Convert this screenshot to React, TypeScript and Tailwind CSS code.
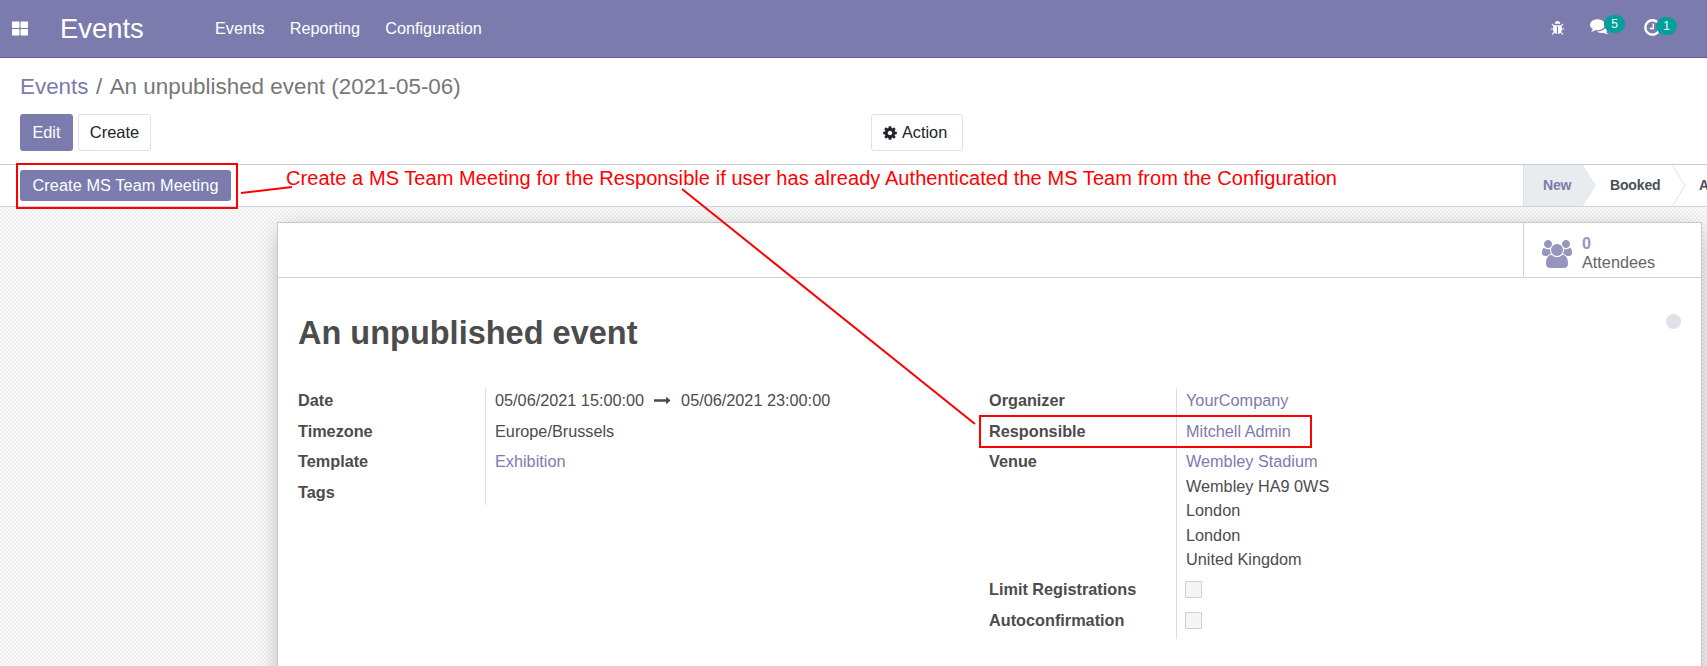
import type { ReactNode } from 'react';
import { FaThLarge } from 'react-icons/fa';

const COG =
  'M1024 896q0-106-75-181t-181-75-181 75-75 181 75 181 181 75 181-75 75-181zM1536 787v222q0 12-8 23t-20 13l-185 28q-19 54-39 91 35 50 107 138 10 12 10 25t-9 23q-27 37-99 108t-94 71q-12 0-26-9l-138-108q-44 23-91 38-16 136-29 186-7 28-36 28h-222q-14 0-24.5-8.5t-11.5-21.5l-28-184q-49-16-90-37l-141 107q-10 9-25 9-14 0-25-11-126-114-165-168-7-10-7-23 0-12 8-23 15-21 51-66.5t54-70.5q-27-50-41-99l-183-27q-13-2-21-12.5t-8-23.5v-222q0-12 8-23t19-13l186-28q14-46 39-92-40-57-107-138-10-12-10-24 0-10 9-23 26-36 98.5-107.5t94.5-71.5q13 0 26 10l138 107q44-23 91-38 16-136 29-186 7-28 36-28h222q14 0 24.5 8.5t11.5 21.5l28 184q49 16 90 37l142-107q9-9 24-9 13 0 25 10 129 119 165 170 7 8 7 22 0 12-8 23-15 21-51 66.5t-54 70.5q26 50 41 98l183 28q13 2 21 12.5t8 23.5z';
const BUG =
  'M1632 960q0 26-19 45t-45 19h-224q0 171-67 290l208 209q19 19 19 45t-19 45q-18 19-45 19t-45-19l-198-197q-5 5-15 13t-42 28.5-65 36.5-82 29-97 13v-896h-128v896q-51 0-101.5-13.5t-87-33-66-39-43.5-32.5l-15-14-183 207q-20 21-48 21-24 0-43-16-19-18-20.5-44.5t15.5-46.5l202-227q-58-114-58-274h-224q-26 0-45-19t-19-45 19-45 45-19h224v-294l-173-173q-19-19-19-45t19-45 45-19 45 19l173 173h844l173-173q19-19 45-19t45 19 19 45-19 45l-173 173v294h224q26 0 45 19t19 45zM1152 320h-640q0-133 93.5-226.5t226.5-93.5 226.5 93.5 93.5 226.5z';
const COMMENTS =
  'M1408 640q0 139-94 257t-256.5 186.5-353.5 68.5q-86 0-176-16-124 88-278 128-36 9-86 16h-3q-11 0-20.5-8t-11.5-21q-1-3-1-6.5t.5-6.5 2-6l2.5-5 3.5-5.5 4-5 4.5-5 4-4.5q5-6 23-25t26-29.5 22.5-29 25-38.5 20.5-44q-124-72-195-177t-71-224q0-139 94-257t256.5-186.5 353.5-68.5 353.5 68.5 256.5 186.5 94 257zM1792 896q0 120-71 224.5t-195 176.5q10 24 20.5 44t25 38.5 22.5 29 26 29.5 23 25q1 1 4 4.5t4.5 5 4 5 3.5 5.5l2.5 5 2 6 .5 6.5-1 6.5q-3 14-13 22t-22 7q-50-7-86-16-154-40-278-128-90 16-176 16-271 0-472-132 58 4 88 4 161 0 309-45t264-129q125-92 192-212t67-254q0-77-23-152 129 71 204 178t75 230z';
const ARROW =
  'M1728 893q0 14-10 24l-384 354q-16 14-35 6-19-9-19-29v-224h-1248q-14 0-23-9t-9-23v-192q0-14 9-23t23-9h1248v-224q0-21 19-29t35 5l384 350q10 10 10 23z';
const USERS =
  'M593 896q-162 5-265 128h-134q-82 0-138-40.5t-56-118.5q0-353 124-353 6 0 43.5 21t97.5 42.5 119 21.5q67 0 133-23-5 37-5 66 0 139 81 256zM1664 1533q0 120-73 189.5t-194 69.5h-874q-121 0-194-69.5t-73-189.5q0-53 3.5-103.5t14-109 26.5-108.5 43-97.5 62-81 85.5-53.5 111.5-20q10 0 43 21.5t73 48 107 48 135 21.5 135-21.5 107-48 73-48 43-21.5q61 0 111.5 20t85.5 53.5 62 81 43 97.5 26.5 108.5 14 109 3.5 103.5zM640 256q0 106-75 181t-181 75-181-75-75-181 75-181 181-75 181 75 75 181zM1344 640q0 159-112.5 271.5t-271.5 112.5-271.5-112.5-112.5-271.5 112.5-271.5 271.5-112.5 271.5 112.5 112.5 271.5zM1920 865q0 78-56 118.5t-138 40.5h-134q-103-123-265-128 81-117 81-256 0-29-5-66 66 23 133 23 59 0 119-21.5t97.5-42.5 43.5-21q124 0 124 353zM1792 256q0 106-75 181t-181 75-181-75-75-181 75-181 181-75 181 75 75 181z';

function Icon({ d, width, className }: { d: string; width: number; className: string }) {
  return (
    <svg className={className} viewBox={`0 0 ${width} 1792`} fill="currentColor">
      <path d={d} />
    </svg>
  );
}

function ClockIcon() {
  return (
    <svg className="h-[17px] w-[17px]" viewBox="0 0 17 17" fill="none" stroke="white">
      <circle cx="8.5" cy="8.5" r="7.2" strokeWidth="2.4" />
      <path d="M9.3 4.5v5H5.8" strokeWidth="1.4" />
    </svg>
  );
}

function Row({ label, height, children }: { label: string; height: string; children?: ReactNode }) {
  return (
    <div className={`flex ${height}`}>
      <div className="w-[187.5px] border-r border-[#dddddd] font-bold">{label}</div>
      <div className="flex-1 pl-[9.5px] whitespace-nowrap">{children}</div>
    </div>
  );
}

function Box() {
  return <span className="mt-[4px] ml-[-1px] block h-[17px] w-[17px] rounded-[1px] border border-[#cfcfcf] bg-[#f5f5f5]" />;
}

function Badge({ children }: { children: ReactNode }) {
  return (
    <span className="flex h-[18px] w-[21px] items-center justify-center rounded-[9px] bg-[#00a09d] text-[12px] leading-none">
      {children}
    </span>
  );
}

export default function App() {
  return (
    <div className="relative flex h-[666px] w-[1707px] flex-col overflow-hidden bg-white font-['Liberation_Sans',Arial,sans-serif] text-[16.25px] leading-[24.5px] text-[#4c4c4c]">
      <header className="flex h-[58px] shrink-0 items-center border-b border-[#5f5e97] bg-[#7c7bad] text-white">
        <FaThLarge className="ml-[12px] h-[17px] w-[16px]" />
        <div className="ml-[32px] w-[155px] text-[27.4px] leading-[32px]">Events</div>
        <nav className="flex gap-[25px]">
          <span>Events</span>
          <span>Reporting</span>
          <span>Configuration</span>
        </nav>
        <div className="ml-auto flex items-center pr-[46px]">
          <Icon d={BUG} width={1664} className="mr-[25px] h-[15px] w-[15px]" />
          <div className="relative mr-[35px] w-[19px] pb-[2px]">
            <Icon d={COMMENTS} width={1792} className="h-[19px] w-[19px]" />
            <div className="absolute -top-[3px] left-[14px]">
              <Badge>5</Badge>
            </div>
          </div>
          <div className="relative w-[17px] pb-[2px]">
            <ClockIcon />
            <div className="absolute -top-[2px] left-[12px]">
              <Badge>1</Badge>
            </div>
          </div>
        </div>
      </header>

      <section className="flex h-[107px] shrink-0 flex-col border-b border-[#cccccc] px-[20px]">
        <div className="mt-[12px] flex h-[34px] items-center text-[22.4px] text-[#777777]">
          <span className="text-[#7c7bad]">Events</span>
          <span className="px-[7.5px] text-[#6c757d]">/</span>
          <span>An unpublished event (2021-05-06)</span>
        </div>
        <div className="mt-[10px] flex h-[37px] text-[#212529]">
          <button className="w-[53px] rounded-[3px] bg-[#7c7bad] text-white">Edit</button>
          <button className="ml-[5px] w-[73px] rounded-[3px] border border-[#dee2e6] text-[16.5px]">Create</button>
          <button className="ml-[720px] flex w-[92px] items-center rounded-[3px] border border-[#dee2e6] pl-[11px]">
            <Icon d={COG} width={1536} className="mr-[5px] h-[16px] w-[14px]" />
            Action
          </button>
        </div>
      </section>

      <section className="flex h-[42px] shrink-0 items-center border-b border-[#ced4da] pl-[20px]">
        <button className="h-[31px] w-[211px] rounded-[3px] bg-[#7c7bad] tracking-[0.1px] text-white">Create MS Team Meeting</button>
        <div className="ml-auto flex h-full w-[184px] items-center overflow-hidden border-l border-[#dee2e6] text-[14px] font-bold tracking-[-0.15px] whitespace-nowrap text-[#495057]">
          <div className="flex h-full w-[59px] shrink-0 items-center bg-[#e9ecef] pl-[19px] text-[#7c7bad]">New</div>
          <svg className="h-[41px] w-[13px] shrink-0" viewBox="0 0 13 41">
            <path d="M0 0 13 20.5 0 41Z" fill="#e9ecef" />
          </svg>
          <span className="ml-[14px] w-[62px] shrink-0">Booked</span>
          <svg className="h-[41px] w-[14px] shrink-0" viewBox="0 0 14 41">
            <path d="M.5 0 13 20.5 .5 41" fill="none" stroke="#dee2e6" />
          </svg>
          <span className="ml-[13px] shrink-0">Announced</span>
        </div>
      </section>

      <main className="flex flex-1 bg-[#f7f7f7] [background-image:conic-gradient(#efefef_25%,#fbfbfb_0_50%,#efefef_0_75%,#fbfbfb_0)] [background-size:4px_4px] pt-[15px] pl-[277px]">
        <div className="h-[480px] w-[1425px] border border-[#c8c8d3] bg-white [box-shadow:0_5px_23px_-4px_rgba(0,0,0,0.3)]">
          <div className="flex h-[55px] justify-end border-b border-[#ced4da]">
            <div className="flex w-[178px] items-center border-l border-[#ced4da] pl-[18px]">
              <Icon d={USERS} width={1920} className="mt-[8px] h-[28px] w-[30px] text-[#9695bd]" />
              <div className="mt-[5px] ml-[10px] leading-[19px]">
                <div className="font-bold text-[#9695bd]">0</div>
                <div className="text-[#666666]">Attendees</div>
              </div>
            </div>
          </div>
          <div className="flex justify-between pt-[33px] pr-[20px] pl-[20px]">
            <h1 className="text-[32.5px] leading-[44px] font-bold">An unpublished event</h1>
            <span className="mt-[3px] h-[15px] w-[15px] rounded-full bg-[#dee2e6]" />
          </div>
          <div className="mt-[33px] flex pl-[20px]">
            <div className="w-[691px]">
              <Row label="Date" height="h-[31px]">
                <div className="flex items-center">
                  05/06/2021 15:00:00
                  <Icon d={ARROW} width={1792} className="mr-[10px] ml-[10px] h-[17px] w-[17px]" />
                  05/06/2021 23:00:00
                </div>
              </Row>
              <Row label="Timezone" height="h-[30px]">Europe/Brussels</Row>
              <Row label="Template" height="h-[31px]"><span className="text-[#7c7bad]">Exhibition</span></Row>
              <Row label="Tags" height="h-[25px]" />
            </div>
            <div className="w-[691px]">
              <Row label="Organizer" height="h-[31px]"><span className="text-[#7c7bad]">YourCompany</span></Row>
              <Row label="Responsible" height="h-[30px]"><span className="text-[#7c7bad]">Mitchell Admin</span></Row>
              <Row label="Venue" height="h-[128px]">
                <div className="text-[#7c7bad]">Wembley Stadium</div>
                <div>Wembley HA9 0WS</div>
                <div>London</div>
                <div>London</div>
                <div>United Kingdom</div>
              </Row>
              <Row label="Limit Registrations" height="h-[31px]"><Box /></Row>
              <Row label="Autoconfirmation" height="h-[31px]"><Box /></Row>
            </div>
          </div>
        </div>
      </main>

      <div className="absolute top-[163px] left-[16px] h-[46px] w-[222px] border-2 border-[#ff0000]" />
      <div className="absolute top-[415px] left-[979px] h-[33px] w-[333px] border-2 border-[#ff0000]" />
      <div className="absolute top-[166px] left-[286px] text-[20px] tracking-[0.07px] whitespace-nowrap text-[#ff0000]">
        Create a MS Team Meeting for the Responsible if user has already Authenticated the MS Team from the Configuration
      </div>
      <svg className="pointer-events-none absolute inset-0" width="1707" height="666" stroke="#ff0000" strokeWidth="2">
        <path d="M241 193 292 187M682 189 975 424" />
      </svg>
    </div>
  );
}
